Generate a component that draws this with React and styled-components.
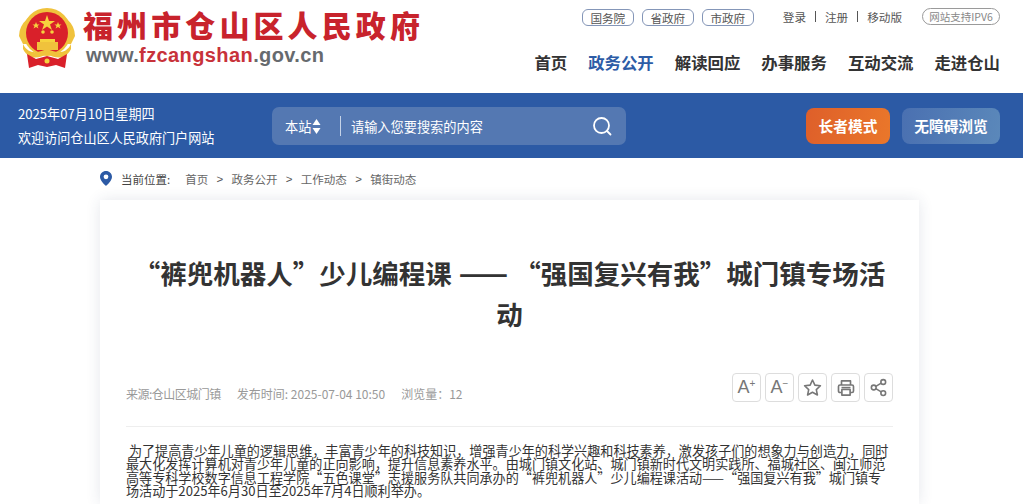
import styled, { createGlobalStyle } from "styled-components"

const GlobalStyle = createGlobalStyle`
  html, body {
    margin: 0;
    padding: 0;
    height: 504px;
    overflow: hidden;
    background: #fff;
    font-family: "Noto Sans CJK SC", "Liberation Sans", sans-serif;
  }
  * { box-sizing: border-box; }
`

const Header = styled.header`
  height: 93px;
  display: flex;
  justify-content: space-between;
  padding: 6px 24px 0 19px;
`

const Logo = styled.div`
  display: flex;
  gap: 8px;
  padding-top: 2px;
  height: 62px;
`

const LogoText = styled.div`
  display: flex;
  flex-direction: column;
  margin-top: -1px;
`

const LogoTitle = styled.div`
  font-size: 30px;
  line-height: 34px;
  font-weight: 900;
  letter-spacing: 4.1px;
  color: #c8232c;
  white-space: nowrap;
`

const LogoUrl = styled.div`
  padding-left: 3px;
  margin-top: 1px;
  font-family: "Liberation Sans", sans-serif;
  font-size: 20px;
  line-height: 26px;
  font-weight: 700;
  letter-spacing: 0.4px;
  color: #666a6e;
  span { color: #c8323a; }
`

const HeaderRight = styled.div`
  display: flex;
  flex-direction: column;
  align-items: flex-end;
`

const TopRow = styled.div`
  display: flex;
  align-items: flex-start;
  height: 21px;
`

const Pill = styled.a`
  width: 52px;
  height: 17px;
  margin-top: 3px;
  margin-right: 8px;
  display: flex;
  align-items: center;
  justify-content: center;
  border: 1px solid #8496b8;
  border-radius: 6px;
  font-size: 11.6px;
  color: #555;
`

const Links = styled.div`
  display: flex;
  align-items: center;
  margin-top: 2px;
  height: 17px;
  margin-left: 21px;
  margin-right: 20px;
  font-size: 11.6px;
  color: #555;
  i {
    width: 1px;
    height: 11px;
    margin: 0 9px;
    background: #555;
  }
`

const IpvTag = styled.div`
  width: 78px;
  height: 17px;
  margin-top: 2px;
  display: flex;
  align-items: center;
  justify-content: center;
  border: 1px solid #9a9a9a;
  border-radius: 9px;
  font-size: 10.5px;
  color: #888;
  white-space: nowrap;
`

const Nav = styled.nav`
  display: flex;
  gap: 21px;
  margin-top: 23px;
`

const NavItem = styled.a`
  font-size: 16.4px;
  line-height: 24px;
  font-weight: 700;
  color: ${({ $active }) => ($active ? "#2d5ca6" : "#333")};
`

const Band = styled.div`
  height: 65px;
  margin-right: 1px;
  display: flex;
  align-items: center;
  padding: 0 23px 0 18px;
  background: #2c5aa5;
`

const Welcome = styled.div`
  width: 254px;
  color: #fff;
  font-size: 13.1px;
  line-height: 24px;
  white-space: nowrap;
`

const SearchBox = styled.div`
  width: 354px;
  height: 38px;
  margin-top: 1px;
  display: flex;
  align-items: center;
  padding: 0 14px 0 13px;
  border-radius: 7px;
  background: #5478b2;
  color: #fff;
  font-size: 13.2px;
`

const Scope = styled.div`
  width: 55px;
  display: flex;
  align-items: center;
  gap: 1px;
  white-space: nowrap;
`

const Sep = styled.i`
  width: 1px;
  height: 20px;
  margin-right: 10px;
  background: #c5d3e8;
`

const Placeholder = styled.div`
  flex: 1;
`

const Actions = styled.div`
  margin-left: auto;
  display: flex;
  gap: 12px;
`

const ActionButton = styled.button`
  height: 36px;
  border: none;
  border-radius: 8px;
  padding: 0;
  width: ${({ $w }) => $w}px;
  background: ${({ $orange }) =>
    $orange
      ? "linear-gradient(100deg, #de5f2a, #ea772a)"
      : "linear-gradient(100deg, #4a70b1, #5b88ba)"};
  color: #fff;
  font-family: inherit;
  font-size: 14.7px;
  font-weight: 700;
`

const Crumbs = styled.div`
  width: 819px;
  height: 42px;
  margin-left: 100px;
  display: flex;
  align-items: center;
  padding-bottom: 1px;
  font-size: 11.5px;
  color: #666;
`

const CrumbLabel = styled.span`
  margin-left: 9px;
  margin-right: 15px;
  color: #444;
`

const CrumbArrow = styled.span`
  margin: 0 8.3px;
  font-family: "Liberation Sans", sans-serif;
  color: #555;
`

const Card = styled.main`
  width: 819px;
  height: 304px;
  margin-left: 100px;
  padding: 52px 26px 0;
  background: #fff;
  box-shadow: 0 0 14px rgba(40, 60, 100, 0.12);
`

const Title = styled.h1`
  width: 760px;
  margin: 0 auto;
  font-size: 26.5px;
  line-height: 41px;
  font-weight: 700;
  color: #333;
  text-align: center;
`

const TitleDash = styled.span`
  margin: 0 6px 0 1px;
  font-size: 29px;
  line-height: 1;
`

const MetaRow = styled.div`
  height: 54px;
  margin-top: 39px;
  display: flex;
  align-items: flex-start;
  justify-content: space-between;
  border-bottom: 1px solid #eee;
`

const Meta = styled.div`
  display: flex;
  gap: 16px;
  margin-top: 12px;
  font-size: 12px;
  line-height: 18px;
  color: #999;
`

const Source = styled.span`
  letter-spacing: -0.5px;
`

const Tools = styled.div`
  display: flex;
  gap: 4px;
`

const Tool = styled.button`
  width: 29px;
  height: 29px;
  padding: 0;
  display: flex;
  align-items: center;
  justify-content: center;
  background: #fff;
  border: 1px solid #ddd;
  border-radius: 4px;
  color: #777;
  font-family: "Liberation Sans", sans-serif;
  font-size: 18px;
  sup {
    font-size: 10px;
    line-height: 1;
    margin-top: -8px;
  }
`

const Body = styled.p`
  margin: 17px 0 0;
  font-size: 13.1px;
  line-height: 13.4px;
  color: #333;
  white-space: pre-wrap;
`

// national emblem, roughly traced from the header logo
function Emblem() {
  return (
    <svg width="56" height="60" viewBox="0 0 56 60">
      <circle cx="28" cy="24" r="24" fill="#f0c23c" />
      <path d="M0 28 a28 24 0 0 1 56 0 L52 36 H4 Z" fill="#f0c23c" />
      <circle cx="28" cy="25" r="21" fill="#d9202a" />
      <polygon points="28,7 30,13 36,13 31,16.5 33,22 28,18.5 23,22 25,16.5 20,13 26,13" fill="#f6d23e" />
      <polygon points="17,14 18,16.5 20.5,16.5 18.5,18 19.5,20.5 17,19 14.5,20.5 15.5,18 13.5,16.5 16,16.5" fill="#f6d23e" />
      <polygon points="39,14 40,16.5 42.5,16.5 40.5,18 41.5,20.5 39,19 36.5,20.5 37.5,18 35.5,16.5 38,16.5" fill="#f6d23e" />
      <circle cx="24" cy="24" r="1.8" fill="#f6d23e" />
      <circle cx="33" cy="24" r="1.8" fill="#f6d23e" />
      <rect x="21" y="31" width="15" height="3" fill="#f6d23e" />
      <rect x="18" y="34" width="21" height="8" fill="#f0c23c" />
      <path d="M4 36 C10 48 21 44 28 41 C35 44 46 48 52 36 L52 41 C46 53 35 50 28 46 C21 50 10 53 4 41 Z" fill="#f0c23c" />
      <path d="M8 46 L17 51 L28 48 L39 51 L48 46 L46 60 L37 57 L28 59 L19 57 L10 60 Z" fill="#d9202a" />
      <circle cx="28" cy="53" r="2.5" fill="#f6d23e" />
    </svg>
  )
}

function SortArrows() {
  return (
    <svg width="9" height="15" viewBox="0 0 9 15" fill="#fff">
      <path d="M4.5 0 L8.5 6 H0.5 Z" />
      <path d="M4.5 15 L8.5 9 H0.5 Z" />
    </svg>
  )
}

function SearchIcon() {
  return (
    <svg width="20" height="20" viewBox="0 0 20 20" fill="none" stroke="#fff" strokeWidth="1.8" strokeLinecap="round">
      <circle cx="9.5" cy="9.5" r="7.5" />
      <path d="M15 15 L18.5 18.5" />
    </svg>
  )
}

function PinIcon() {
  return (
    <svg width="12" height="15" viewBox="0 0 12 15">
      <path
        fillRule="evenodd"
        d="M6 0 C2.7 0 0 2.6 0 5.8 C0 9.6 4.4 13.6 6 15 C7.6 13.6 12 9.6 12 5.8 C12 2.6 9.3 0 6 0 Z M6 3.4 A2.4 2.4 0 1 1 6 8.2 A2.4 2.4 0 1 1 6 3.4 Z"
        fill="#2c5aa5"
      />
    </svg>
  )
}

function StarIcon() {
  return (
    <svg width="19" height="19" viewBox="0 0 24 24" fill="none" stroke="#777" strokeWidth="2" strokeLinejoin="round">
      <polygon points="12,2.5 15,9 22,9.8 16.8,14.6 18.2,21.5 12,18 5.8,21.5 7.2,14.6 2,9.8 9,9" />
    </svg>
  )
}

function PrintIcon() {
  return (
    <svg width="18" height="18" viewBox="0 0 24 24" fill="none" stroke="#777" strokeWidth="2.2" strokeLinejoin="round">
      <path d="M6 8 V2.5 H18 V8" />
      <rect x="2" y="8" width="20" height="10" rx="2" />
      <rect x="6.5" y="14" width="11" height="7.5" fill="#fff" />
      <path d="M6 11.5 H18" />
    </svg>
  )
}

function ShareIcon() {
  return (
    <svg width="19" height="19" viewBox="0 0 24 24" fill="none" stroke="#777" strokeWidth="2">
      <circle cx="18" cy="5" r="3" />
      <circle cx="6" cy="12" r="3" />
      <circle cx="18" cy="19" r="3" />
      <path d="M8.6 10.5 L15.4 6.5 M8.6 13.5 L15.4 17.5" />
    </svg>
  )
}

const navItems = ["首页", "政务公开", "解读回应", "办事服务", "互动交流", "走进仓山"]

const bodyText =
  " 为了提高青少年儿童的逻辑思维，丰富青少年的科技知识，增强青少年的科学兴趣和科技素养，激发孩子们的想象力与创造力，同时最大化发挥计算机对青少年儿童的正向影响，提升信息素养水平。由城门镇文化站、城门镇新时代文明实践所、福城社区、闽江师范高等专科学校数字信息工程学院“五色课堂”志援服务队共同承办的“裤兜机器人”少儿编程课活动——“强国复兴有我”城门镇专场活动于2025年6月30日至2025年7月4日顺利举办。"

export default function App() {
  return (
    <>
      <GlobalStyle />
      <Header>
        <Logo>
          <Emblem />
          <LogoText>
            <LogoTitle>福州市仓山区人民政府</LogoTitle>
            <LogoUrl>
              www.<span>fzcangshan</span>.gov.cn
            </LogoUrl>
          </LogoText>
        </Logo>
        <HeaderRight>
          <TopRow>
            <Pill>国务院</Pill>
            <Pill>省政府</Pill>
            <Pill>市政府</Pill>
            <Links>
              登录<i />注册<i />移动版
            </Links>
            <IpvTag>网站支持IPV6</IpvTag>
          </TopRow>
          <Nav>
            {navItems.map((item) => (
              <NavItem key={item} $active={item === "政务公开"}>
                {item}
              </NavItem>
            ))}
          </Nav>
        </HeaderRight>
      </Header>
      <Band>
        <Welcome>
          2025年07月10日星期四
          <br />
          欢迎访问仓山区人民政府门户网站
        </Welcome>
        <SearchBox>
          <Scope>
            本站
            <SortArrows />
          </Scope>
          <Sep />
          <Placeholder>请输入您要搜索的内容</Placeholder>
          <SearchIcon />
        </SearchBox>
        <Actions>
          <ActionButton $orange $w={84}>长者模式</ActionButton>
          <ActionButton $w={98}>无障碍浏览</ActionButton>
        </Actions>
      </Band>
      <Crumbs>
        <PinIcon />
        <CrumbLabel>当前位置:</CrumbLabel>
        首页
        <CrumbArrow>&gt;</CrumbArrow>
        政务公开
        <CrumbArrow>&gt;</CrumbArrow>
        工作动态
        <CrumbArrow>&gt;</CrumbArrow>
        镇街动态
      </Crumbs>
      <Card>
        <Title>“裤兜机器人”少儿编程课 <TitleDash>——</TitleDash>“强国复兴有我”城门镇专场活动</Title>
        <MetaRow>
          <Meta>
            <Source>来源:仓山区城门镇</Source>
            <span>发布时间: 2025-07-04 10:50</span>
            <span>浏览量：12</span>
          </Meta>
          <Tools>
            <Tool>A<sup>+</sup></Tool>
            <Tool>A<sup>−</sup></Tool>
            <Tool><StarIcon /></Tool>
            <Tool><PrintIcon /></Tool>
            <Tool><ShareIcon /></Tool>
          </Tools>
        </MetaRow>
        <Body>{bodyText}</Body>
      </Card>
    </>
  )
}
